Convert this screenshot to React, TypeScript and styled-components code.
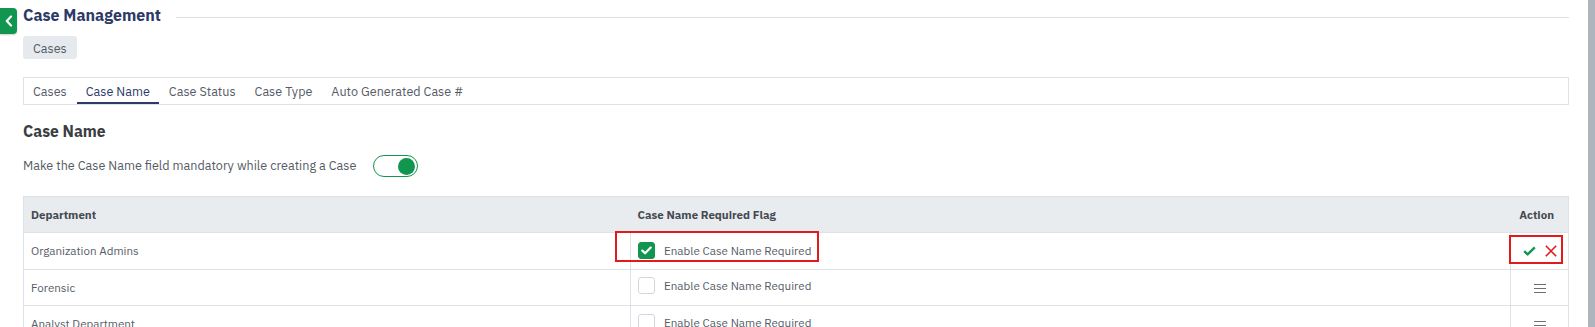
import React from "react";
import styled, { createGlobalStyle } from "styled-components";

const GREEN = "#11964f";
const NAVY = "#2b3a67";
const BORDER = "#dee2e6";
const RED = "#e3191c";

const Global = createGlobalStyle`
  html, body { margin: 0; padding: 0; background: #fff; }
  body { font-family: "IBM Plex Sans", Roboto, "Liberation Sans", sans-serif; overflow: hidden; }
  * { box-sizing: border-box; }
`;

const Page = styled.div`
  display: flex;
  height: 100vh;
  width: 100vw;
  overflow: hidden;
`;

const Main = styled.main`
  position: relative;
  flex: 1;
  padding: 4px 19px 0 23px;
  min-width: 0;
`;

const Rail = styled.div`
  width: 7px;
  flex: none;
  background: #adb4bb;
`;

const BackButton = styled.button`
  position: absolute;
  left: 0;
  top: 8px;
  width: 17px;
  height: 26px;
  border: none;
  padding: 0;
  border-radius: 0 4px 4px 0;
  background: ${GREEN};
  display: flex;
  align-items: center;
  justify-content: center;
  box-shadow: 0 1px 2px rgba(0, 0, 0, 0.2);
`;

const HeaderRow = styled.div`
  display: flex;
  align-items: center;
  height: 22px;
  gap: 15px;
`;

const Title = styled.h1`
  margin: 0;
  font-size: 16px;
  font-weight: 700;
  color: ${NAVY};
  white-space: nowrap;
  line-height: 22px;
`;

const Rule = styled.div`
  flex: 1;
  height: 1px;
  background: #dcdfe3;
  margin-top: 4px;
`;

const Chip = styled.div`
  display: inline-flex;
  align-items: center;
  height: 23px;
  margin-top: 10px;
  padding: 0 10px;
  border-radius: 3px;
  background: #e6e9ed;
  color: #555b66;
  font-size: 12.6px;
`;

const TabBar = styled.div`
  display: flex;
  margin-top: 18px;
  height: 28px;
  border: 1px solid ${BORDER};
  gap: 1px;
`;

const Tab = styled.div<{ $active?: boolean }>`
  display: flex;
  align-items: center;
  padding: 0 9px;
  font-size: 12.6px;
  color: ${(p) => (p.$active ? NAVY : "#555b66")};
  border-bottom: 2px solid ${(p) => (p.$active ? NAVY : "transparent")};
  padding-top: 1px;
  white-space: nowrap;
`;

const Heading = styled.h2`
  margin: 16px 0 0;
  font-size: 15.7px;
  line-height: 20px;
  font-weight: 700;
  color: #3a3d42;
`;

const SettingRow = styled.div`
  display: flex;
  align-items: center;
  gap: 17px;
  margin-top: 14px;
  height: 22px;
`;

const SettingLabel = styled.span`
  font-size: 12.6px;
  line-height: 16px;
  margin-top: -3px;
  color: #555b66;
`;

const Toggle = styled.div<{ $on: boolean }>`
  width: 45px;
  height: 22px;
  border-radius: 11px;
  border: 1px solid ${GREEN};
  background: #fff;
  display: flex;
  align-items: center;
  justify-content: ${(p) => (p.$on ? "flex-end" : "flex-start")};
  padding: 0 2px;
`;

const Knob = styled.div`
  width: 17px;
  height: 17px;
  border-radius: 50%;
  background: ${GREEN};
`;

const Table = styled.table`
  margin-top: 19px;
  width: 100%;
  border-collapse: collapse;
  table-layout: fixed;
  font-size: 11.6px;
`;

const Th = styled.th<{ $align?: "left" | "right" }>`
  height: 36px;
  background: #e9ecef;
  border: 1px solid ${BORDER};
  border-left: none;
  border-right: none;
  text-align: ${(p) => p.$align || "left"};
  padding: 0 ${(p) => (p.$align === "right" ? "14px" : "7px")} 0 7px;
  font-size: 11.5px;
  font-weight: 700;
  color: #454a52;
  &:first-child { border-left: 1px solid ${BORDER}; }
  &:last-child { border-right: 1px solid ${BORDER}; }
`;

const Td = styled.td<{ $align?: "left" | "right" | "center" }>`
  position: relative;
  height: 36.5px;
  border: 1px solid ${BORDER};
  padding: 0 7px;
  color: #555b66;
  text-align: ${(p) => p.$align || "left"};
`;

const FlagWrap = styled.label`
  display: inline-flex;
  align-items: center;
  gap: 9px;
  color: #555b66;
  font-size: 11.6px;
`;

const Box = styled.span<{ $checked: boolean }>`
  width: 17px;
  height: 17px;
  border-radius: 3px;
  border: 1px solid ${(p) => (p.$checked ? GREEN : "#d3d7dc")};
  background: ${(p) => (p.$checked ? GREEN : "#fff")};
  display: inline-flex;
  align-items: center;
  justify-content: center;
`;

const Highlight = styled.div<{ $l: number; $t: number; $w: number; $h: number }>`
  position: absolute;
  left: ${(p) => p.$l}px;
  top: ${(p) => p.$t}px;
  width: ${(p) => p.$w}px;
  height: ${(p) => p.$h}px;
  border: 2px solid ${RED};
  pointer-events: none;
`;

const ActionGroup = styled.div`
  display: flex;
  align-items: center;
  justify-content: flex-end;
  gap: 9px;
  padding-right: 4px;
`;

const MenuIcon = () => (
  <svg width="12" height="9" viewBox="0 0 12 9" style={{ display: "inline-block", verticalAlign: "middle" }}>
    <path d="M0 0.5h12M0 4.5h12M0 8.5h12" stroke="#6b6f75" strokeWidth="1" />
  </svg>
);

const rows = [
  { dept: "Organization Admins", checked: true, editing: true },
  { dept: "Forensic", checked: false, editing: false },
  { dept: "Analyst Department", checked: false, editing: false },
];

export default function App() {
  return (
    <>
      <Global />
      <Page>
        <Main>
          <BackButton aria-label="Back">
            <svg width="10" height="12" viewBox="0 0 10 12">
              <path d="M7 1.5L2.8 6L7 10.5" fill="none" stroke="#fff" strokeWidth="2.2" strokeLinecap="round" strokeLinejoin="round" />
            </svg>
          </BackButton>
          <HeaderRow>
            <Title>Case Management</Title>
            <Rule />
          </HeaderRow>
          <Chip>Cases</Chip>
          <TabBar>
            <Tab>Cases</Tab>
            <Tab $active>Case Name</Tab>
            <Tab>Case Status</Tab>
            <Tab>Case Type</Tab>
            <Tab>Auto Generated Case #</Tab>
          </TabBar>
          <Heading>Case Name</Heading>
          <SettingRow>
            <SettingLabel>Make the Case Name field mandatory while creating a Case</SettingLabel>
            <Toggle $on>
              <Knob />
            </Toggle>
          </SettingRow>
          <Table>
            <colgroup>
              <col style={{ width: 607 }} />
              <col />
              <col style={{ width: 58 }} />
            </colgroup>
            <thead>
              <tr>
                <Th>Department</Th>
                <Th>Case Name Required Flag</Th>
                <Th $align="right">Action</Th>
              </tr>
            </thead>
            <tbody>
              {rows.map((r) => (
                <tr key={r.dept}>
                  <Td>{r.dept}</Td>
                  <Td>
                    {r.editing && <Highlight $l={-16} $t={-2} $w={204} $h={31} />}
                    <FlagWrap>
                      <Box $checked={r.checked}>
                        {r.checked && (
                          <svg width="11" height="9" viewBox="0 0 11 9">
                            <path d="M1.3 4.6L4.1 7.3L9.7 1.6" fill="none" stroke="#fff" strokeWidth="2.2" strokeLinecap="round" strokeLinejoin="round" />
                          </svg>
                        )}
                      </Box>
                      Enable Case Name Required
                    </FlagWrap>
                  </Td>
                  <Td $align="center">
                    {r.editing ? (
                      <>
                        <Highlight $l={-2} $t={2} $w={54} $h={29} />
                        <ActionGroup>
                          <svg width="13" height="10" viewBox="0 0 13 10">
                            <path d="M1.2 5.2L4.6 8.4L11.8 1.4" fill="none" stroke={GREEN} strokeWidth="2.4" strokeLinejoin="round" />
                          </svg>
                          <svg width="12" height="12" viewBox="0 0 12 12">
                            <path d="M0.8 0.8L11.2 11.2M11.2 0.8L0.8 11.2" stroke={RED} strokeWidth="1.6" />
                          </svg>
                        </ActionGroup>
                      </>
                    ) : (
                      <MenuIcon />
                    )}
                  </Td>
                </tr>
              ))}
            </tbody>
          </Table>
        </Main>
        <Rail />
      </Page>
    </>
  );
}
